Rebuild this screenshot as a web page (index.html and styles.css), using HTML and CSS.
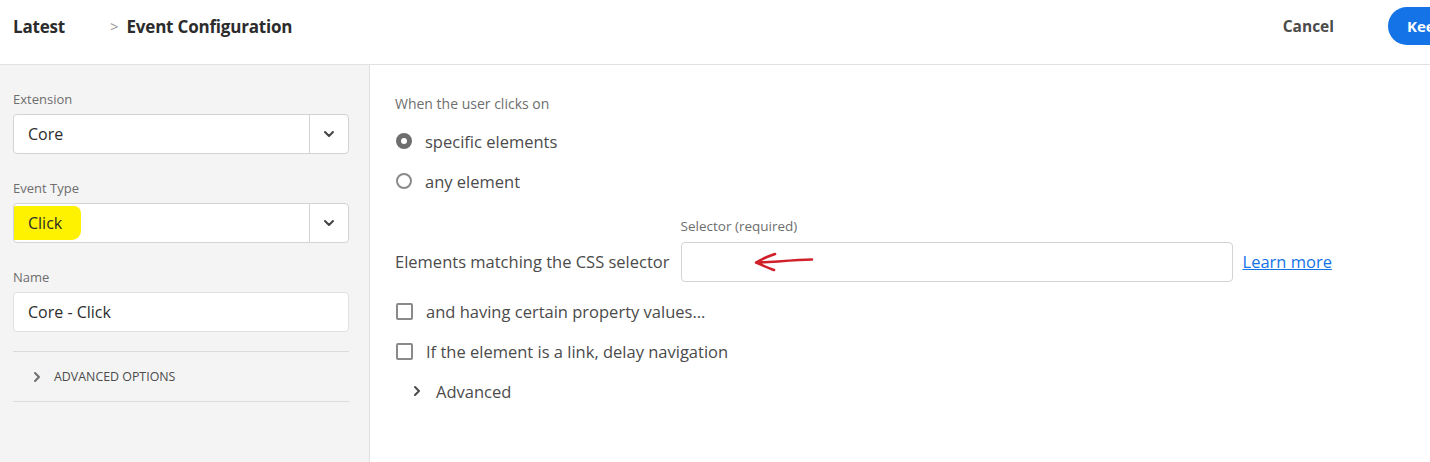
FILE: index.html
```html
<!DOCTYPE html>
<html>
<head>
<meta charset="utf-8">
<link rel="stylesheet" href="styles.css">
</head>
<body>
<header class="topbar">
  <div class="crumbs">
    <span class="crumb-root">Latest</span>
    <span class="crumb-sep">&gt;</span>
    <span class="crumb-current">Event Configuration</span>
  </div>
  <div class="actions">
    <span class="cancel">Cancel</span>
    <span class="keep">Kee</span>
  </div>
</header>
<main class="main">
  <aside class="side">
    <div class="field">
      <div class="label">Extension</div>
      <div class="select"><span class="select-value">Core</span><span class="select-btn"><svg width="14" height="14" viewBox="0 0 14 14"><path d="M3 5l4 4 4-4" fill="none" stroke="#444" stroke-width="2" stroke-linecap="round" stroke-linejoin="round"/></svg></span></div>
    </div>
    <div class="field">
      <div class="label">Event Type</div>
      <div class="select"><span class="select-value"><span class="marker">Click</span></span><span class="select-btn"><svg width="14" height="14" viewBox="0 0 14 14"><path d="M3 5l4 4 4-4" fill="none" stroke="#444" stroke-width="2" stroke-linecap="round" stroke-linejoin="round"/></svg></span></div>
    </div>
    <div class="field">
      <div class="label">Name</div>
      <div class="textbox">Core - Click</div>
    </div>
    <div class="adv-options">
      <svg width="10" height="12" viewBox="0 0 10 12"><path d="M3 2l4 4-4 4" fill="none" stroke="#6e6e6e" stroke-width="2" stroke-linecap="round" stroke-linejoin="round"/></svg>
      <span>ADVANCED OPTIONS</span>
    </div>
  </aside>
  <section class="content">
    <div class="intro">When the user clicks on</div>
    <div class="option first"><span class="radio checked"></span><span>specific elements</span></div>
    <div class="option"><span class="radio"></span><span>any element</span></div>
    <div class="selector-row">
      <span class="selector-text">Elements matching the CSS selector</span>
      <div class="selector-field">
        <div class="sel-label">Selector (required)</div>
        <div class="sel-input">
          <svg class="arrow" width="62" height="22" viewBox="0 0 62 22"><path d="M58 8.5 C48 8.5 36 9.5 24 10.5 C16 11 10 11 5 11.5 M21 3 C15 5 8 8 2 11.5 C8 14 14 17 20 19" fill="none" stroke="#d0202a" stroke-width="2.6" stroke-linecap="round" stroke-linejoin="round"/></svg>
        </div>
      </div>
      <a class="learn">Learn more</a>
    </div>
    <div class="option check first-check"><span class="box"></span><span>and having certain property values...</span></div>
    <div class="option check"><span class="box"></span><span>If the element is a link, delay navigation</span></div>
    <div class="advanced">
      <svg width="10" height="12" viewBox="0 0 10 12"><path d="M3 2l4 4-4 4" fill="none" stroke="#4b4b4b" stroke-width="2" stroke-linecap="round" stroke-linejoin="round"/></svg>
      <span>Advanced</span>
    </div>
  </section>
</main>
</body>
</html>
```
FILE: styles.css
```css
* { box-sizing: border-box; }
html, body { margin: 0; padding: 0; }
body {
  width: 1430px;
  height: 462px;
  overflow: hidden;
  font-family: "Open Sans", "Liberation Sans", sans-serif;
  color: #2c2c2c;
  background: #fff;
}
.topbar {
  height: 65px;
  border-bottom: 1px solid #e1e1e1;
  display: flex;
  align-items: center;
  justify-content: space-between;
  padding: 0 0 12px 13px;
}
.crumbs { display: flex; align-items: center; }
.crumb-root { font-size: 17px; font-weight: 700; color: #2c2c2c; letter-spacing: -0.2px; }
.crumb-sep { margin-left: 45px; font-size: 15px; color: #9a9a9a; }
.crumb-current { margin-left: 8px; font-size: 17px; font-weight: 700; color: #2c2c2c; letter-spacing: -0.2px; }
.actions { display: flex; align-items: center; }
.cancel { font-size: 15.5px; font-weight: 700; color: #4b4b4b; margin-right: 54px; }
.keep {
  background: #1473e6;
  color: #fff;
  font-size: 15px;
  font-weight: 700;
  height: 38px;
  line-height: 38px;
  border-radius: 19px 0 0 19px;
  padding-left: 19px;
  width: 42px;
  overflow: hidden;
  white-space: nowrap;
}
.main { display: flex; height: 397px; }
.side {
  width: 370px;
  background: #f4f4f4;
  border-right: 1px solid #e1e1e1;
  padding: 27px 20px 0 13px;
}
.field + .field { margin-top: 27px; }
.label { font-size: 13px; color: #6e6e6e; height: 15px; line-height: 15px; margin-bottom: 7px; }
.select {
  display: flex;
  height: 40px;
  background: #fff;
  border: 1px solid #d3d3d3;
  border-radius: 4px;
}
.select-value { flex: 1; font-size: 16px; line-height: 38px; padding-left: 14px; color: #2c2c2c; }
.select-btn {
  width: 39px;
  border-left: 1px solid #d3d3d3;
  display: flex;
  align-items: center;
  justify-content: center;
}
.marker {
  background: #fff200;
  padding: 6px 19px 6px 14px;
  margin-left: -14px;
  border-radius: 1px 7px 9px 1px;
}
.textbox {
  height: 40px;
  background: #fff;
  border: 1px solid #e1e1e1;
  border-radius: 4px;
  font-size: 16px;
  line-height: 38px;
  padding-left: 14px;
  color: #2c2c2c;
}
.adv-options {
  margin-top: 19px;
  border-top: 1px solid #dcdcdc;
  border-bottom: 1px solid #dcdcdc;
  height: 51px;
  display: flex;
  align-items: center;
  padding-left: 19px;
  gap: 12px;
  font-size: 12.4px;
  color: #4b4b4b;
}
.content { flex: 1; padding: 30px 0 0 25px; color: #4b4b4b; }
.intro { font-size: 14px; color: #6e6e6e; height: 18px; line-height: 18px; }
.option { display: flex; align-items: center; height: 40px; font-size: 16.5px; color: #4b4b4b; }
.option.first { margin-top: 8px; }
.radio {
  width: 16px; height: 16px;
  border: 2px solid #8a8a8a;
  border-radius: 50%;
  margin-left: 1px;
  margin-right: 13px;
}
.radio.checked { border: 5px solid #6e6e6e; background: #fff; }
.selector-row { display: flex; align-items: flex-end; margin-top: 16px; }
.selector-text { font-size: 16.5px; color: #4b4b4b; height: 40px; line-height: 40px; margin-right: 11px; }
.selector-field { width: 552px; }
.sel-label { font-size: 13.5px; color: #6e6e6e; height: 18px; line-height: 18px; margin-bottom: 7px; }
.sel-input {
  height: 40px;
  border: 1px solid #d3d3d3;
  border-radius: 4px;
  background: #fff;
  display: flex;
  align-items: center;
  padding-left: 72px;
}
.learn { font-size: 16.5px; color: #1473e6; text-decoration: underline; height: 40px; line-height: 40px; margin-left: 10px; }
.option.first-check { margin-top: 9px; }
.box {
  width: 17px; height: 17px;
  border: 2px solid #8a8a8a;
  border-radius: 2px;
  margin-left: 1px;
  margin-right: 13px;
}
.advanced { display: flex; align-items: center; gap: 14px; height: 40px; padding-left: 17px; font-size: 16.5px; color: #4b4b4b; }
```
